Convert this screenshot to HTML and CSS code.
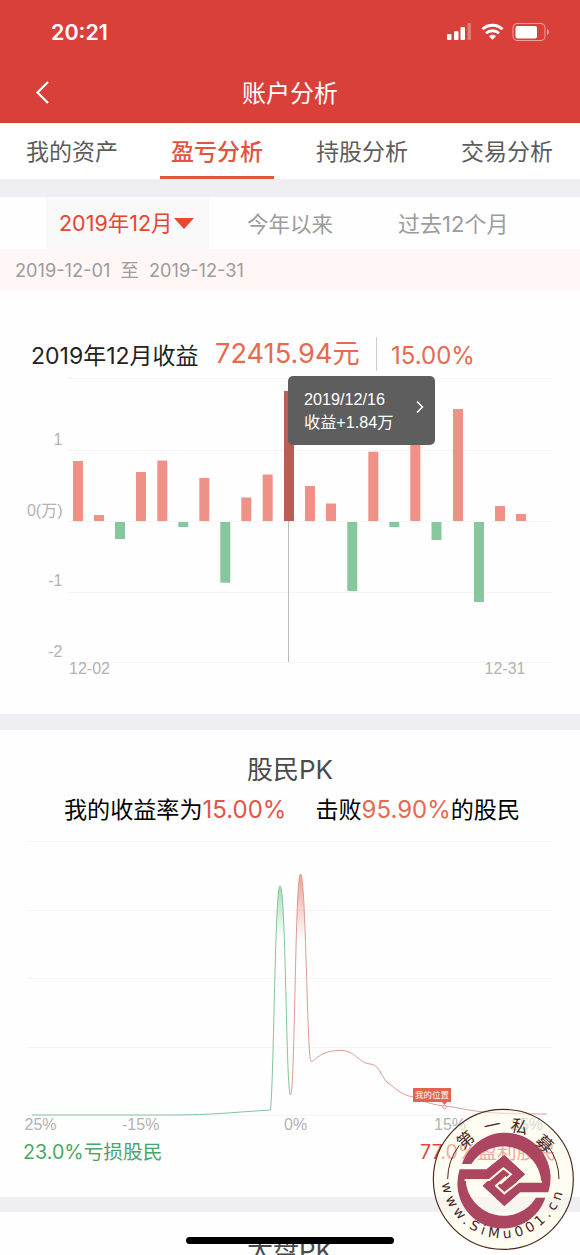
FILE: index.html
```html
<!DOCTYPE html>
<html lang="zh-CN">
  <head>
    <meta charset="UTF-8">
    <title>账户分析</title>
    <link rel="stylesheet" href="styles.css">
  </head>
  <body>
    <div class="app">
      <header class="header">
        <div class="status-bar">
          <span class="time">20:21</span>
          <svg class="status-icons" width="106" height="24" viewBox="0 0 106 24">
            <g fill="#fff">
              <rect x="1" y="14" width="4.500" height="6" rx="1" />
              <rect x="8" y="11" width="4.500" height="9" rx="1" />
              <rect x="14.500" y="7" width="4.500" height="13" rx="1" />
              <rect x="21.500" y="3" width="3.500" height="17" rx="1" opacity=".3" />
              <path d="M46.500 19.800l-3.500-3.600a5 5 0 0 1 7 0z" />
              <rect x="69.500" y="6" width="21.500" height="12.500" rx="2" />
              <path d="M101 9v6q2-1 2-3t-2-3z" opacity=".5" />
            </g>
            <g fill="none" stroke="#fff">
              <path d="M36.500 9.300a14.500 14.500 0 0 1 20 0M40 13.300a9.500 9.500 0 0 1 13 0" stroke-width="2.900" />
              <rect x="67" y="3.500" width="32" height="17" rx="4" opacity=".5" />
            </g>
          </svg>
        </div>
        <div class="nav">
          <svg class="back" width="16" height="26" viewBox="0 0 16 26">
            <path d="M13 2L2.500 12.500L13 23" fill="none" stroke="#fff" stroke-width="2.200" />
          </svg>
          <h1 class="nav-title">账户分析</h1>
        </div>
      </header>

      <nav class="tabs">
        <a class="tab">我的资产</a>
        <a class="tab active">盈亏分析</a>
        <a class="tab">持股分析</a>
        <a class="tab">交易分析</a>
      </nav>

      <div class="filters">
        <div class="filter selected">2019年12月<span class="arrow"></span></div>
        <div class="filter year">今年以来</div>
        <div class="filter past">过去12个月</div>
      </div>
      <div class="range">2019-12-01&nbsp; 至&nbsp; 2019-12-31</div>

      <section class="profit">
        <div class="profit-head">
          <span class="profit-label">2019年12月收益</span>
          <span class="profit-value">72415.94元</span>
          <span class="profit-rate">15.00%</span>
        </div>
        <div class="chart">
          <svg class="chart-svg" width="580" height="340" viewBox="0 374 580 340">
            <path class="grid" d="M68 378.500H552M68 450.500H552M68 521.500H552M68 592.500H552M68 662.500H552" />
            <g class="gain">
              <rect x="73" y="461" width="10" height="60" />
              <rect x="94" y="515" width="10" height="6" />
              <rect x="136" y="472" width="10" height="49" />
              <rect x="157.300" y="460.500" width="10" height="60.500" />
              <rect x="199.300" y="478" width="10" height="43" />
              <rect x="241.300" y="497.500" width="10" height="23.500" />
              <rect x="262.700" y="474.500" width="10" height="46.500" />
              <rect class="current" x="284" y="391" width="10" height="130" />
              <rect x="305" y="486" width="10" height="35" />
              <rect x="326" y="503.500" width="10" height="17.500" />
              <rect x="368.300" y="451.700" width="10" height="69.300" />
              <rect x="410.300" y="430" width="10" height="91" />
              <rect x="453" y="409" width="10" height="112" />
              <rect x="495" y="506" width="10" height="15" />
              <rect x="516" y="514" width="10" height="7" />
            </g>
            <g class="loss">
              <rect x="115" y="522" width="10" height="17" />
              <rect x="178.300" y="522" width="10" height="5" />
              <rect x="220.300" y="522" width="10" height="60.700" />
              <rect x="347.300" y="522" width="10" height="69" />
              <rect x="389.300" y="522" width="10" height="5" />
              <rect x="431.500" y="522" width="10" height="18" />
              <rect x="474" y="522" width="10" height="80" />
            </g>
            <path d="M288.500 521V662" stroke="#bbb" />
            <g class="axis" text-anchor="end">
              <text x="62.500" y="445">1</text>
              <text x="62.500" y="516">0(万)</text>
              <text x="62.500" y="586">-1</text>
              <text x="62.500" y="657">-2</text>
            </g>
            <g class="axis">
              <text x="69" y="674">12-02</text>
              <text x="484.500" y="674">12-31</text>
            </g>
          </svg>
          <div class="tooltip">
            <div>2019/12/16<br>收益+1.84万</div>
            <svg width="10" height="14" viewBox="0 0 10 14">
              <path d="M2 1.500L7.500 7L2 12.500" fill="none" stroke="#fff" stroke-width="1.500" />
            </svg>
          </div>
        </div>
      </section>

      <section class="pk">
        <h2 class="pk-title">股民PK</h2>
        <p class="pk-text">
          <span>我的收益率为<b class="red">15.00%</b></span>
          <span>击败<b class="orange">95.90%</b>的股民</span>
        </p>
        <svg class="pk-chart" width="580" height="302" viewBox="0 834 580 302">
          <defs>
            <linearGradient id="greenFill" gradientUnits="userSpaceOnUse" x1="0" y1="886" x2="0" y2="940">
              <stop offset="0" stop-color="#7fd0a0" stop-opacity=".7" />
              <stop offset="1" stop-color="#7fd0a0" stop-opacity="0" />
            </linearGradient>
            <linearGradient id="redFill" gradientUnits="userSpaceOnUse" x1="0" y1="874" x2="0" y2="940">
              <stop offset="0" stop-color="#ec8678" stop-opacity=".8" />
              <stop offset="1" stop-color="#ec8678" stop-opacity="0" />
            </linearGradient>
          </defs>
          <path class="grid" d="M27 841.500H552M27 910.500H552M27 978.500H552M27 1047.500H552M27 1115.500H552" />
          <path d="M32 1115H170C215 1115 235 1112 270.500 1110C274 1075 275 886 280 886C286 886 286 1095 290.500 1095" fill="url(#greenFill)" stroke="#82c49a" />
          <path d="M290.500 1095C295 1095 295 874 300.500 874C306 874 307 1061 311 1061.500C315 1062 319 1050 341 1050.500C356 1050.500 358 1063 370 1064C380 1065 379 1074 388 1083C394 1087 402 1096 414 1097C428 1104 440 1106 453 1107C478 1112 490 1114 547 1114" fill="url(#redFill)" stroke="#dc9c93" />
          <path d="M413 1088h38v14h-4l-2.500 3l-2.500-3h-29z" fill="#e2644d" />
          <text class="marker" x="432" y="1098" text-anchor="middle">我的位置</text>
          <circle cx="444.500" cy="1107" r="1.800" fill="#fff" stroke="#e2917f" />
          <g class="axis">
            <text x="24.500" y="1130">25%</text>
            <text x="122" y="1130">-15%</text>
            <text x="284" y="1130">0%</text>
            <text x="434" y="1130">15%</text>
            <text x="511" y="1130">25%</text>
          </g>
        </svg>
        <div class="pk-foot">
          <span class="losers">23.0%亏损股民</span>
          <span class="winners">77.0%盈利股民</span>
        </div>
      </section>

      <section class="market">
        <h2 class="market-title">大盘PK</h2>
      </section>

      <div class="home-bar"></div>

      <svg class="seal" width="150" height="150" viewBox="0 0 450 450">
        <defs>
          <path id="urlArc" d="M36 234A185 185 0 0 0 404 234V200" />
        </defs>
        <circle cx="220" cy="223" r="210" fill="#fffbe8" fill-opacity=".55" stroke="#49291f" stroke-width="3.500" />
        <path d="M53 222A167 167 0 0 1 88 121M387 222A167 167 0 0 0 352 121" fill="none" stroke="#49291f" stroke-width="3" />
        <!-- upper arc runs into the right band, lower arc into the left one -->
        <g fill="#ac4660">
          <path d="M96 177A135 135 0 0 1 355 262H270L223 303L158 242L178 224L265 231H334A114 114 0 0 0 124 177Z" />
          <path d="M89 193H170L223 150L285 208L258 231L178 224H107A114 114 0 0 0 318 278H346A135 135 0 0 1 89 193Z" />
          <path d="M170 193L223 150L285 208L262 229L270 260L223 303L158 242L178 224Z" />
        </g>
        <path d="M104 225H178L220 190L243 208L211 236M336 230H267L223 265L198 242L229 215" fill="none" stroke="#fffbe2" stroke-width="6" />
        <g class="seal-name" text-anchor="middle">
          <text y="18" transform="translate(107 105) rotate(-40)">第</text>
          <text y="18" transform="translate(187 62) rotate(-12)">一</text>
          <text y="18" transform="translate(268 65) rotate(14)">私</text>
          <text y="18" transform="translate(343 116) rotate(42)">募</text>
        </g>
        <text class="seal-url"><textPath href="#urlArc" startOffset="1">www.SiMu001.cn</textPath></text>
      </svg>
    </div>
  </body>
</html>
```
FILE: styles.css
```css
* {
  box-sizing: border-box;
}

body {
  margin: 0;
  font-family: Inter, "Noto Sans CJK SC", sans-serif;
  font-weight: 400;
  background: #fff;
}

h1,
h2,
p {
  margin: 0;
  font-weight: inherit;
}

b {
  font-weight: inherit;
}

svg {
  display: block;
}

.app {
  position: relative;
  width: 580px;
  height: 1255px;
  overflow: hidden;
  background: #fefefe;
}

.header {
  height: 123px;
  background: #da403a;
  color: #fff;
}

.status-bar {
  display: flex;
  justify-content: space-between;
  align-items: center;
  height: 63px;
  padding: 0 28px 0 51px;
}

.time {
  font-size: 21.500px;
  font-weight: 600;
}

.nav {
  display: grid;
  grid-template-columns: 1fr auto 1fr;
  align-items: center;
  height: 60px;
  padding: 0 35px;
}

.nav-title {
  padding-bottom: 4px;
  font-size: 24px;
}

.tabs {
  display: flex;
  height: 56px;
  padding-left: 11px;
  background: #fff;
}

.tab {
  width: 122px;
  font-size: 23px;
  line-height: 58px;
  text-align: center;
  color: #5c5c5c;
}

.tab.active {
  width: 114px;
  margin: 0 27px;
  border-bottom: 3px solid #e4533f;
  color: #e4533f;
  font-weight: 500;
}

.tab:last-child {
  margin-left: 23px;
}

.filters {
  display: flex;
  height: 70px;
  padding-left: 46px;
  border-top: 18px solid #eeeef3;
  font-size: 21.500px;
  line-height: 54px;
  color: #9c9c9c;
}

.filter.selected {
  display: flex;
  align-items: center;
  width: 163px;
  padding-left: 13px;
  background: #f9f9f9;
  color: #e64532;
  white-space: nowrap;
}

.arrow {
  margin-left: 1px;
  border: 10px solid transparent;
  border-top: 11px solid #ed4434;
  border-bottom: 0;
}

.filter.year {
  margin-left: 38px;
}

.filter.past {
  margin-left: 65px;
  font-size: 22px;
}

.range {
  height: 42px;
  padding-left: 15px;
  background: #fef7f6;
  font-size: 18.200px;
  line-height: 43px;
  color: #9c9c9c;
}

.profit {
  height: 423px;
  padding-top: 43px;
}

.profit-head {
  display: flex;
  align-items: center;
  height: 40px;
  padding-left: 31px;
  white-space: nowrap;
}

.profit-label {
  width: 184px;
  font-size: 23px;
  color: #222;
}

.profit-value {
  width: 162px;
  border-right: 1px solid #ccc;
  font-size: 27.200px;
  line-height: 34px;
  color: #e66a4f;
}

.profit-rate {
  padding: 2px 0 0 14px;
  font-size: 24px;
  color: #e66a4f;
}

.chart {
  position: relative;
}

.grid {
  fill: none;
  stroke: #f5f5f5;
}

.gain {
  fill: #ee9287;
}

.gain .current {
  fill: #bb5b52;
}

.loss {
  fill: #87c79d;
}

.axis {
  font-family: "Liberation Sans", "Noto Sans CJK SC", sans-serif;
  font-size: 16px;
  fill: #b2b2b2;
}

.tooltip {
  position: absolute;
  top: 2px;
  left: 288px;
  display: flex;
  justify-content: space-between;
  align-items: center;
  width: 147px;
  height: 69px;
  padding: 0 10px 0 16px;
  border-radius: 5px;
  background: #5e5e5e;
  color: #fff;
  font-family: "Liberation Sans", "Noto Sans CJK SC", sans-serif;
  font-size: 16.200px;
  line-height: 23px;
}

.tooltip svg {
  margin-top: -7px;
}

.pk {
  height: 483px;
  border-top: 16px solid #eeeef3;
  padding-top: 20px;
}

.pk-title {
  height: 40px;
  font-size: 26px;
  line-height: 40px;
  text-align: center;
  color: #4a4a4a;
}

.pk-text {
  display: flex;
  gap: 29px;
  height: 44px;
  padding-left: 64px;
  font-size: 23.100px;
  line-height: 39px;
  color: #000;
  white-space: nowrap;
}

.pk-text b {
  font-size: 24px;
}

.red {
  color: #e25548;
}

.orange {
  color: #e66a4f;
}

.marker {
  font-size: 8.500px;
  fill: #fff;
}

.pk-foot {
  display: flex;
  justify-content: space-between;
  padding: 0 24px 0 23px;
  font-size: 19.700px;
  line-height: 33px;
}

.losers {
  color: #4ba568;
}

.winners {
  color: #e6453c;
}

.market {
  border-top: 15px solid #eeeef3;
  padding-top: 19px;
}

.market-title {
  font-size: 26px;
  line-height: 40px;
  text-align: center;
  color: #4a4a4a;
}

.home-bar {
  position: absolute;
  top: 1237px;
  left: 186px;
  width: 208px;
  height: 7px;
  border-radius: 4px;
  background: #000;
}

.seal {
  position: absolute;
  top: 1105px;
  left: 430px;
}

.seal-name {
  font-family: "Noto Sans CJK SC", sans-serif;
  font-size: 51px;
  fill: #49291f;
}

.seal-url {
  font-family: "DejaVu Sans", sans-serif;
  font-size: 41px;
  letter-spacing: 12.500px;
  fill: #49291f;
}
```
